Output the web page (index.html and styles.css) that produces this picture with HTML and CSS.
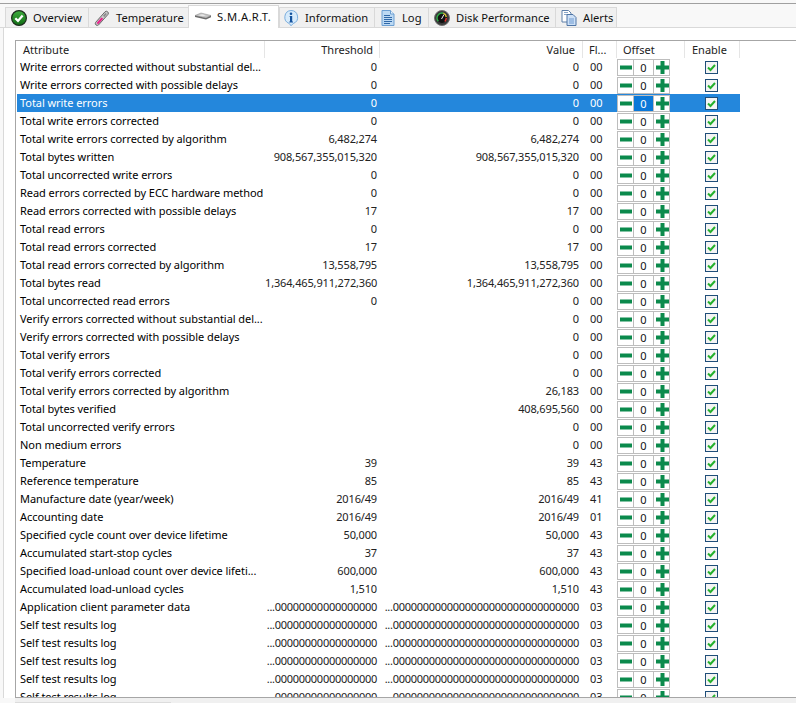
FILE: index.html
```html
<!DOCTYPE html>
<html lang="en">
<head>
<meta charset="utf-8">
<title>S.M.A.R.T.</title>
<link rel="stylesheet" href="styles.css">
</head>
<body>
<div class="window">
<nav class="tabs">
<div class="tab t1"><svg class="ic" viewBox="0 0 16 16"><defs><linearGradient id="g1" x1="0" y1="0" x2="0" y2="1"><stop offset="0" stop-color="#3fae3f"/><stop offset="1" stop-color="#0f6a12"/></linearGradient></defs><circle cx="8" cy="8" r="7.400" fill="url(#g1)" stroke="#1c2a1c" stroke-width="1.200"/><path d="M4.300 8.200l2.700 2.700 4.600-5.400" fill="none" stroke="#fff" stroke-width="2.300"/></svg><span>Overview</span></div>
<div class="tab t2"><svg class="ic" viewBox="0 0 16 16"><path d="M1.500 12.500L11 1.800a2 2 0 0 1 3 2.600L4.500 15a2 2 0 0 1-3-2.500z" fill="#c9c9c9" stroke="#6a6a6a"/><path d="M2.500 13L7.500 7.400l1.700 1.400L4.200 14.300z" fill="#e8248c"/><path d="M9 5.800l2.500-2.800 1.300 1-2.500 2.900z" fill="#8a8a8a"/></svg><span>Temperature</span></div>
<div class="tab active t3"><svg class="ic" viewBox="0 0 16 16"><path d="M0 7.500L6 5l10 2.500-5 2.500z" fill="#c4c4c4" stroke="#8a8a8a" stroke-width=".5"/><path d="M0 7.500V9l11 2.600 5-2.300V7.500l-5 2.500z" fill="#6b6b6b"/><path d="M3 7.300l4-1 4 1-3 1z" fill="#e6e6e6"/></svg><span>S.M.A.R.T.</span></div>
<div class="tab t4"><svg class="ic" viewBox="0 0 16 16"><path d="M8 .5a6.700 6.700 0 0 1 2.200 13L8 15.800l-1.700-2.300A6.700 6.700 0 0 1 8 .5z" fill="#d7ebfb" stroke="#7aaede"/><path d="M7 6h2.200v5.500H10v1H6.300v-1H7V7H6.300z" fill="#14539e"/><circle cx="8" cy="3.800" r="1.300" fill="#14539e"/></svg><span>Information</span></div>
<div class="tab t5"><svg class="ic" viewBox="0 0 16 16"><path d="M2 .5h8.500L14 4v11.500H2z" fill="#bcd9f3" stroke="#6c9fd2"/><path d="M10.500.5V4H14" fill="#e8f3fc" stroke="#6c9fd2"/><path d="M4 5.500h6M4 7.500h8M4 9.500h8M4 11.500h8M4 13.500h6" stroke="#2f68a8"/></svg><span>Log</span></div>
<div class="tab t6"><svg class="ic" viewBox="0 0 16 16"><circle cx="8" cy="8" r="7.500" fill="#3a3a3a" stroke="#6f6f6f"/><circle cx="8" cy="8" r="5" fill="#111"/><path d="M4.300 11.300a5 5 0 0 1 5-8.100" fill="none" stroke="#2fae48" stroke-width="1.400"/><path d="M9.300 3.200a5 5 0 0 1 3 4" fill="none" stroke="#d8c82c" stroke-width="1.400"/><path d="M12.300 8a5 5 0 0 1-1.500 3.400" fill="none" stroke="#e53232" stroke-width="1.400"/><path d="M7.500 9l2.500-4.500" stroke="#eee"/></svg><span>Disk Performance</span></div>
<div class="tab t7"><svg class="ic" viewBox="0 0 16 16"><path d="M1 .5h6.500L10 3v9H1z" fill="#fff" stroke="#5d7ea8"/><path d="M3 2.500h4M3 4.500h4" stroke="#8aa6c8"/><path d="M6 4.500h6l3 3v8H6z" fill="#cde0f6" stroke="#4f75a5"/><path d="M8 9h5M8 11h5M8 13h5" stroke="#6f9ad0"/></svg><span>Alerts</span></div>
</nav>
<main class="panel">
<section class="list" id="list"></section>
</main>
<div class="hscroll"><div class="thumb"></div></div>
</div>
<script src="app.js"></script>
</body>
</html>
```
FILE: styles.css
```css
*{box-sizing:border-box}
html,body{margin:0;padding:0;width:796px;height:703px;overflow:hidden;background:#f8f8f8}
body{font-family:"Noto Sans","Open Sans",sans-serif;font-size:11px;color:#000}
.window{position:relative;height:703px;padding-top:3px;overflow:hidden}
.tabs{display:flex;height:25px;border-top:1px solid #a0a0a0;padding:0 0 0 5px;align-items:flex-end;border-bottom:1px solid #d9d9d9;background:#f8f8f8}
.tab{height:20px;display:flex;align-items:center;gap:6px;padding-left:5px;background:#f0f0f0;border:1px solid #d9d9d9;border-right:0;border-bottom:0;white-space:nowrap;font-size:11.200px;color:#111}
.tab.active{height:23px;background:#fff;margin-bottom:-1px;padding:0 0 2px 6px;border-right:1px solid #d9d9d9;position:relative;letter-spacing:.4px}
.ic{width:16px;height:16px;flex:none}
.t1{width:83px}.t2{width:100px}.t3{width:91px}.t4{width:95px;padding-left:3px}.t5{width:54px}.t6{width:127px}.t7{width:62px;border-right:1px solid #d9d9d9}
.panel{margin-left:3px;border-left:1px solid #d9d9d9;padding:12px 0 0 11px;height:670px;background:#fff}
.list{border:1px solid #a6a6a6;border-right:0;height:658px;overflow:hidden;padding-left:1px}
.row{display:grid;grid-template-columns:248px 115px 203px 34px 68px 55px;height:18px;align-items:center;width:723px;white-space:nowrap}
.row>span{overflow:hidden;padding:0 0 2px 3px;letter-spacing:-.06px}
.row.head{height:17px;color:#222}
.row.head>span{border-right:1px solid #e5e5e5;height:17px;line-height:18px;padding:0 0 0 6px;letter-spacing:0}
.row.head>.r{padding:0 6px 0 0}
.row.head>.e{padding-left:7px}
.row>.r{text-align:right;padding:0 3px 2px 0}
.row>.v{padding-right:4px}
.row.head>.v{padding-right:7px}
.row>.f{padding-left:7px}
.row.head>.f{padding-left:6px}
.row.sel{background:#2487dc;color:#fff}
.row>.num{color:#222;letter-spacing:-.15px}
.row>.z{letter-spacing:-.28px}
.row.sel>.num{color:#fff}
.spin{display:flex;width:53px;height:17px;border:1px solid #bdbdbd;background:#fff;align-items:stretch}
.sb{width:15px;flex:none;display:flex;align-items:center;justify-content:center;background:#fff;padding-left:1px}
.sb+.sv+.sb{padding-left:2px}
.sb svg{width:13px;height:13px;flex:none}
.sv{flex:1;text-align:center;border:solid #bdbdbd;border-width:0 1px;line-height:16px;color:#111}
.sel .sv{background:#0b78d8;color:#fff}
.ckw{padding-left:20px}
.ck{width:13px;height:13px;border:1px solid #1f4e79;background:#f4f4f4;display:block;margin-top:1px}
.ck svg{display:block;width:11px;height:11px}
.hscroll{position:absolute;left:15px;right:0;top:698px;height:5px;background:#f0f0f0;padding-top:4px}
.thumb{width:156px;height:1px;background:#dcdcdc}
```
FILE: app.js
```js
const Z='...00000000000000000';
const V='...0000000000000000000000000000000';
const rows=[
['Write errors corrected without substantial del...','0','0','00'],
['Write errors corrected with possible delays','0','0','00'],
['Total write errors','0','0','00'],
['Total write errors corrected','0','0','00'],
['Total write errors corrected by algorithm','6,482,274','6,482,274','00'],
['Total bytes written','908,567,355,015,320','908,567,355,015,320','00'],
['Total uncorrected write errors','0','0','00'],
['Read errors corrected by ECC hardware method','0','0','00'],
['Read errors corrected with possible delays','17','17','00'],
['Total read errors','0','0','00'],
['Total read errors corrected','17','17','00'],
['Total read errors corrected by algorithm','13,558,795','13,558,795','00'],
['Total bytes read','1,364,465,911,272,360','1,364,465,911,272,360','00'],
['Total uncorrected read errors','0','0','00'],
['Verify errors corrected without substantial del...','','0','00'],
['Verify errors corrected with possible delays','','0','00'],
['Total verify errors','','0','00'],
['Total verify errors corrected','','0','00'],
['Total verify errors corrected by algorithm','','26,183','00'],
['Total bytes verified','','408,695,560','00'],
['Total uncorrected verify errors','','0','00'],
['Non medium errors','','0','00'],
['Temperature','39','39','43'],
['Reference temperature','85','85','43'],
['Manufacture date (year/week)','2016/49','2016/49','41'],
['Accounting date','2016/49','2016/49','01'],
['Specified cycle count over device lifetime','50,000','50,000','43'],
['Accumulated start-stop cycles','37','37','43'],
['Specified load-unload count over device lifeti...','600,000','600,000','43'],
['Accumulated load-unload cycles','1,510','1,510','43'],
['Application client parameter data',Z,V,'03'],
['Self test results log',Z,V,'03'],
['Self test results log',Z,V,'03'],
['Self test results log',Z,V,'03'],
['Self test results log',Z,V,'03'],
['Self test results log',Z,V,'03']];
const minus='<svg viewBox="0 0 13 13"><rect x="0" y="4.500" width="12" height="4" fill="#0b8a4c"/></svg>';
const plus='<svg viewBox="0 0 13 13"><path d="M4.500 0h4v4.500H13v4H8.500V13h-4V8.500H0v-4h4.500z" fill="#0b8a4c"/></svg>';
const check='<svg viewBox="0 0 11 11"><path d="M2 5.500l2.500 2.500L9 3" fill="none" stroke="#25b02c" stroke-width="2"/></svg>';
let html='<div class="row head"><span>Attribute</span><span class="r">Threshold</span><span class="r v">Value</span><span class="f">Fl...</span><span class="f">Offset</span><span class="e">Enable</span></div>';
rows.forEach((r,i)=>{
const z=r[1]===Z?' z':'';
html+=`<div class="row${i===2?' sel':''}"><span>${r[0]}</span><span class="r num${z}">${r[1]}</span><span class="r v num${z}">${r[2]}</span><span class="f num">${r[3]}</span><div class="spin"><div class="sb">${minus}</div><div class="sv">0</div><div class="sb">${plus}</div></div><div class="ckw"><span class="ck">${check}</span></div></div>`;
});
document.getElementById('list').innerHTML=html;
```
